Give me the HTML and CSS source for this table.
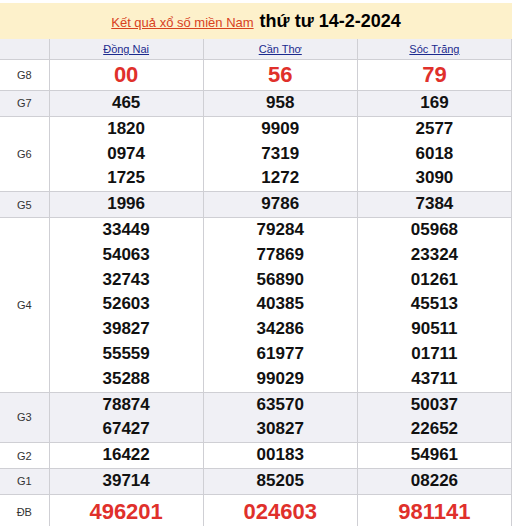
FILE: index.html
```html
<!DOCTYPE html>
<html lang="vi">
<head>
<meta charset="utf-8">
<title>Kết quả xổ số miền Nam</title>
<link rel="stylesheet" href="styles.css">
</head>
<body>
<div class="wrap">
  <div class="title">
    <a href="#" class="title-link">Kết quả xổ số miền Nam</a>
    <span class="title-date">thứ tư 14-2-2024</span>
  </div>
  <table class="kq">
    <colgroup>
      <col class="c-label"><col class="c-prov"><col class="c-prov"><col class="c-prov">
    </colgroup>
    <tr class="head">
      <th></th>
      <th><a href="#">Đồng Nai</a></th>
      <th><a href="#">Cần Thơ</a></th>
      <th><a href="#">Sóc Trăng</a></th>
    </tr>
    <tr class="g8">
      <td class="lbl">G8</td>
      <td><div>00</div></td><td><div>56</div></td><td><div>79</div></td>
    </tr>
    <tr class="alt">
      <td class="lbl">G7</td>
      <td><div>465</div></td><td><div>958</div></td><td><div>169</div></td>
    </tr>
    <tr>
      <td class="lbl">G6</td>
      <td><div>1820</div><div>0974</div><div>1725</div></td>
      <td><div>9909</div><div>7319</div><div>1272</div></td>
      <td><div>2577</div><div>6018</div><div>3090</div></td>
    </tr>
    <tr class="alt">
      <td class="lbl">G5</td>
      <td><div>1996</div></td><td><div>9786</div></td><td><div>7384</div></td>
    </tr>
    <tr>
      <td class="lbl">G4</td>
      <td><div>33449</div><div>54063</div><div>32743</div><div>52603</div><div>39827</div><div>55559</div><div>35288</div></td>
      <td><div>79284</div><div>77869</div><div>56890</div><div>40385</div><div>34286</div><div>61977</div><div>99029</div></td>
      <td><div>05968</div><div>23324</div><div>01261</div><div>45513</div><div>90511</div><div>01711</div><div>43711</div></td>
    </tr>
    <tr class="alt">
      <td class="lbl">G3</td>
      <td><div>78874</div><div>67427</div></td>
      <td><div>63570</div><div>30827</div></td>
      <td><div>50037</div><div>22652</div></td>
    </tr>
    <tr>
      <td class="lbl">G2</td>
      <td><div>16422</div></td><td><div>00183</div></td><td><div>54961</div></td>
    </tr>
    <tr class="alt">
      <td class="lbl">G1</td>
      <td><div>39714</div></td><td><div>85205</div></td><td><div>08226</div></td>
    </tr>
    <tr class="db">
      <td class="lbl">ĐB</td>
      <td><div>496201</div></td><td><div>024603</div></td><td><div>981141</div></td>
    </tr>
  </table>
</div>
</body>
</html>
```
FILE: styles.css
```css
html, body {
  margin: 0;
  padding: 0;
  background: #ffffff;
}
body {
  font-family: "Liberation Sans", Arial, sans-serif;
  padding-top: 3px;
}
.wrap {
  width: 512px;
}
.title {
  background: #fdf1cb;
  height: 36px;
  display: flex;
  align-items: center;
  justify-content: center;
  gap: 6px;
}
.title-link {
  color: #d8411e;
  font-size: 13px;
  text-decoration: underline;
  padding-top: 2px;
}
.title-date {
  color: #000;
  font-size: 18px;
  font-weight: bold;
}
.kq {
  width: 512px;
  border-collapse: collapse;
  table-layout: fixed;
}
.c-label { width: 49px; }
.c-prov { width: 154px; }
.kq th, .kq td {
  border: 1px solid #cfcfd4;
  padding: 0;
  text-align: center;
  vertical-align: middle;
}
.kq tr > :first-child {
  border-left: none;
}
.kq .head th {
  border-top: none;
  background: #efeff4;
  height: 20px;
  font-weight: normal;
  font-size: 11px;
}
.head a {
  color: #1b2a8e;
  text-decoration: underline;
}
.kq td div {
  font-size: 17px;
  font-weight: bold;
  line-height: 24.8px;
  color: #111;
}
.kq td.lbl {
  font-size: 11px;
  color: #333;
}
.alt td {
  background: #f0f0f5;
}
.kq .g8 td div {
  color: #e0302b;
  font-size: 22px;
  line-height: 30px;
}
.kq .db td div {
  color: #e0302b;
  font-size: 22px;
  line-height: 34px;
}
```
